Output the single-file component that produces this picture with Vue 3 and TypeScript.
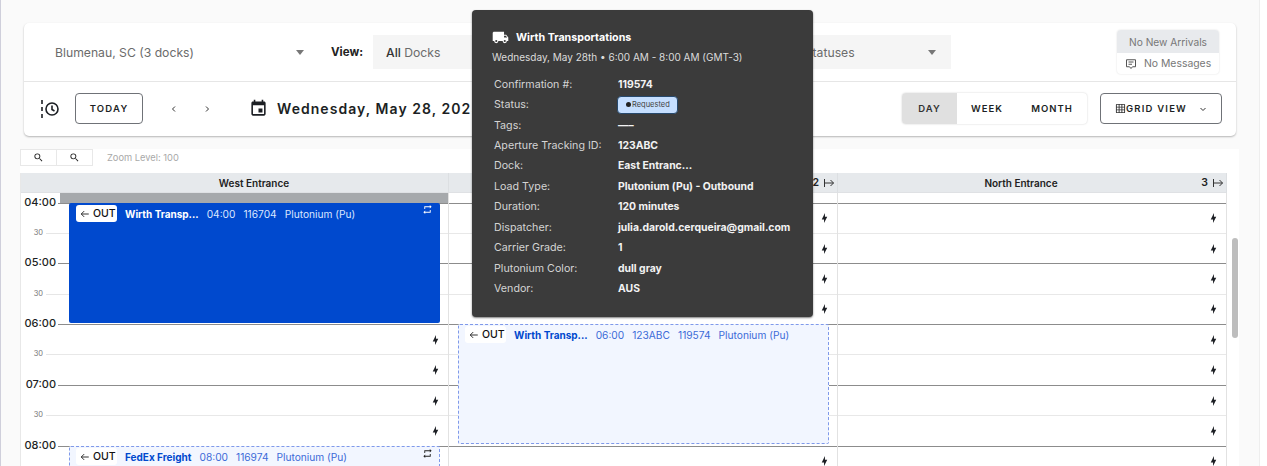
<script setup lang="ts">
interface Appt {
  top: number
  height: number
  kind: 'solid' | 'soft'
  name: string
  meta: string[]
  loop: boolean
}
interface Dock {
  name: string
  num: string
  gray: boolean
  appts: Appt[]
}

const hours = ['04:00', '05:00', '06:00', '07:00', '08:00']
const ticks: { label: string; hour: boolean }[] = []
hours.forEach((h) => {
  ticks.push({ label: h, hour: true })
  ticks.push({ label: '30', hour: false })
})

const docks: Dock[] = [
  {
    name: 'West Entrance',
    num: '',
    gray: true,
    appts: [
      { top: 10, height: 120, kind: 'solid', name: 'Wirth Transp...', meta: ['04:00', '116704', 'Plutonium (Pu)'], loop: true },
      { top: 253, height: 120, kind: 'soft', name: 'FedEx Freight', meta: ['08:00', '116974', 'Plutonium (Pu)'], loop: true }
    ]
  },
  {
    name: 'East Entrance',
    num: '2',
    gray: false,
    appts: [
      { top: 131, height: 120, kind: 'soft', name: 'Wirth Transp...', meta: ['06:00', '123ABC', '119574', 'Plutonium (Pu)'], loop: false }
    ]
  },
  { name: 'North Entrance', num: '3', gray: false, appts: [] }
]

const details: { label: string; value: string }[] = [
  { label: 'Confirmation #:', value: '119574' },
  { label: 'Status:', value: '' },
  { label: 'Tags:', value: '—–' },
  { label: 'Aperture Tracking ID:', value: '123ABC' },
  { label: 'Dock:', value: 'East Entranc...' },
  { label: 'Load Type:', value: 'Plutonium (Pu) - Outbound' },
  { label: 'Duration:', value: '120 minutes' },
  { label: 'Dispatcher:', value: 'julia.darold.cerqueira@gmail.com' },
  { label: 'Carrier Grade:', value: '1' },
  { label: 'Plutonium Color:', value: 'dull gray' },
  { label: 'Vendor:', value: 'AUS' }
]

const bolt = 'M11 15H6L13 1V9H18L11 23V15Z'
const loop = 'M17,17H7V14L3,18L7,22V19H19V13H17M7,7H17V10L21,6L17,2V5H5V11H7V7Z'
const magnify =
  'M9.5,3A6.5,6.5 0 0,1 16,9.5C16,11.11 15.41,12.59 14.44,13.73L14.71,14H15.5L20.5,19L19,20.5L14,15.5V14.71L13.73,14.44C12.59,15.41 11.11,16 9.5,16A6.5,6.5 0 0,1 3,9.5A6.5,6.5 0 0,1 9.5,3M9.5,5C7,5 5,7 5,9.5C5,12 7,14 9.5,14C12,14 14,12 14,9.5C14,7 12,5 9.5,5Z'
</script>

<template>
  <div class="page">
    <div class="edge"></div>
    <main class="main">
      <section class="card">
        <div class="filters">
          <div class="location">
            <span>Blumenau, SC (3 docks)</span>
            <i class="caret"></i>
          </div>
          <span class="view-label">View:</span>
          <div class="box box-docks">
            <span><b class="all">All</b> Docks</span>
          </div>
          <div class="box box-status">
            <span>All Statuses</span>
            <i class="caret"></i>
          </div>
          <div class="arrivals">
            <div class="arrivals-top">No New Arrivals</div>
            <div class="arrivals-bottom">
              <svg class="msg" viewBox="0 0 24 24" fill="none" stroke="#555" stroke-width="2">
                <path d="M3 3.5h18v14h-6l-3 3.5-3-3.5H3z" />
                <path d="M7 8h10M7 12.5h7" />
              </svg>
              <span>No Messages</span>
            </div>
          </div>
        </div>
        <div class="controls">
          <svg class="history" viewBox="0 0 20 20" fill="none" stroke="#1c1f24" stroke-width="1.6">
            <path d="M2 1v4M2 8v4M2 15v4" />
            <circle cx="12" cy="10" r="6" />
            <path d="M12 6.5V10.5l2.5 1.5" />
          </svg>
          <button class="outline today">TODAY</button>
          <svg class="chev chev-first" viewBox="0 0 8 8" fill="none" stroke="#333" stroke-width="1"><path d="M5 1.5 2.5 4 5 6.5" /></svg>
          <svg class="chev chev-second" viewBox="0 0 8 8" fill="none" stroke="#333" stroke-width="1"><path d="M3 1.5 5.5 4 3 6.5" /></svg>
          <svg class="cal" viewBox="0 0 24 24" fill="#1c1f24">
            <path d="M17 12h-5v5h5v-5zM16 1v2H8V1H6v2H5c-1.11 0-1.99.9-1.99 2L3 19c0 1.1.89 2 2 2h14c1.1 0 2-.9 2-2V5c0-1.1-.9-2-2-2h-1V1h-2zm3 18H5V8h14v11z" />
          </svg>
          <span class="date">Wednesday, May 28, 2025</span>
          <div class="range">
            <span class="range-item active">DAY</span>
            <span class="range-item week">WEEK</span>
            <span class="range-item month">MONTH</span>
          </div>
          <button class="outline gridview">
            <svg class="grid-ico" viewBox="0 0 24 24" fill="#333">
              <path d="M10,4V8H14V4H10M16,4V8H20V4H16M16,10V14H20V10H16M16,16V20H20V16H16M14,20V16H10V20H14M8,20V16H4V20H8M8,14V10H4V14H8M8,8V4H4V8H8M10,14H14V10H10V14M4,2H20A2,2 0 0,1 22,4V20A2,2 0 0,1 20,22H4C2.92,22 2,21.1 2,20V4A2,2 0 0,1 4,2Z" />
            </svg>
            <span>GRID VIEW</span>
            <svg class="grid-chev" viewBox="0 0 8 8" fill="none" stroke="#333" stroke-width="1"><path d="M1.5 3 4 5.5 6.5 3" /></svg>
          </button>
        </div>
      </section>

      <div class="zoombar">
        <div class="zoombtns">
          <span class="zoombtn"><svg viewBox="0 0 24 24" fill="#222"><path :d="magnify" /></svg></span>
          <span class="zoombtn"><svg viewBox="0 0 24 24" fill="#222"><path :d="magnify" /></svg></span>
        </div>
        <span class="zoomlabel">Zoom Level: 100</span>
      </div>

      <div class="sheet">
        <div class="timecol">
          <div class="head"></div>
          <div class="spacer"></div>
          <div v-for="(t, i) in ticks" :key="i" class="tick" :class="{ hour: t.hour }">
            <span class="tick-label">{{ t.label }}</span>
            <span class="tick-line"></span>
          </div>
        </div>
        <div v-for="d in docks" :key="d.name" class="dock">
          <div class="head dock-head" :class="{ numbered: d.num }">
            <span>{{ d.name }}</span>
            <span v-if="d.num" class="dock-num">
              {{ d.num }}
              <svg viewBox="0 0 12 12" fill="none" stroke="#333" stroke-width="1"><path d="M1.5 2v8M1.5 6h9M7.5 3l3 3-3 3" /></svg>
            </span>
          </div>
          <div class="dock-body">
            <div class="spacer" :class="{ gray: d.gray }"></div>
            <div v-for="(t, i) in ticks" :key="i" class="cell" :class="{ hour: t.hour }">
              <svg class="bolt" viewBox="0 0 24 24" fill="#1c1f24"><path :d="bolt" /></svg>
            </div>
            <article
              v-for="a in d.appts"
              :key="a.name + a.top"
              class="appt"
              :class="a.kind"
              :style="{ top: a.top + 'px', height: a.height + 'px' }"
            >
              <span class="badge">
                <svg viewBox="0 0 12 12" fill="none" stroke="#222" stroke-width="1.1"><path d="M10.5 6h-9M5 2.5 1.5 6 5 9.5" /></svg>
                OUT
              </span>
              <span class="appt-name">{{ a.name }}</span>
              <span v-for="m in a.meta" :key="m" class="appt-meta">{{ m }}</span>
              <svg v-if="a.loop" class="loop" viewBox="0 0 24 24" fill="currentColor"><path :d="loop" /></svg>
            </article>
          </div>
        </div>
        <div class="scroll"><span class="thumb"></span></div>
      </div>
    </main>
    <aside class="side"></aside>

    <div class="tip">
      <div class="tip-title">
        <svg viewBox="0 0 24 24" fill="#fff">
          <path d="M18,18.5A1.5,1.5 0 0,1 16.5,17A1.5,1.5 0 0,1 18,15.5A1.5,1.5 0 0,1 19.5,17A1.5,1.5 0 0,1 18,18.5M19.5,9.5L21.46,12H17V9.5M6,18.5A1.5,1.5 0 0,1 4.5,17A1.5,1.5 0 0,1 6,15.5A1.5,1.5 0 0,1 7.5,17A1.5,1.5 0 0,1 6,18.5M20,8H17V4H3C1.89,4 1,4.89 1,6V17H3A3,3 0 0,0 6,20A3,3 0 0,0 9,17H15A3,3 0 0,0 18,20A3,3 0 0,0 21,17H23V12L20,8Z" />
        </svg>
        <span>Wirth Transportations</span>
      </div>
      <div class="tip-sub">Wednesday, May 28th • 6:00 AM - 8:00 AM (GMT-3)</div>
      <div class="tip-rows">
        <div v-for="r in details" :key="r.label" class="tip-row">
          <span class="tip-label">{{ r.label }}</span>
          <span v-if="r.value" class="tip-value">{{ r.value }}</span>
          <span v-else class="chip"><i class="chip-dot"></i>Requested</span>
        </div>
      </div>
    </div>
  </div>
</template>

<style scoped>
.page {
  position: relative;
  display: flex;
  width: 1267px;
  height: 466px;
  overflow: hidden;
  background: #fafafa;
  font-family: Inter, "Liberation Sans", sans-serif;
  color: #1c1f24;
}
.edge {
  width: 1px;
  background: #cfcfdb;
  flex: none;
}
.main {
  width: 1258px;
  flex: none;
  padding: 23px 0 0 19px;
  box-sizing: border-box;
}
.side {
  flex: 1;
  background: #fff;
  border-left: 1px solid #eeeeee;
}
.card {
  width: 1212px;
  margin-left: 4px;
  background: #fff;
  border-radius: 5px;
  box-shadow: 0 1px 2px rgba(0, 0, 0, 0.28);
}
.filters {
  display: flex;
  align-items: center;
  height: 59px;
  box-sizing: border-box;
  padding-left: 31px;
  border-bottom: 1px solid #e6e6e6;
  font-size: 12.2px;
  color: #6b6b6b;
}
.location {
  display: flex;
  align-items: center;
  justify-content: space-between;
  width: 249px;
  margin-right: 27px;
}
.caret {
  display: block;
  width: 0;
  height: 0;
  border-left: 4.5px solid transparent;
  border-right: 4.5px solid transparent;
  border-top: 5px solid #777;
}
.view-label {
  width: 42px;
  font-weight: 700;
  font-size: 11.5px;
  color: #222;
}
.box {
  display: flex;
  align-items: center;
  justify-content: space-between;
  height: 34px;
  background: #f5f5f5;
  box-sizing: border-box;
}
.box-docks {
  width: 387px;
  padding-left: 13px;
  margin-right: 10px;
}
.all {
  font-weight: 500;
  color: #333;
}
.box-status {
  width: 181px;
  padding: 0 15px 0 17px;
}
.arrivals {
  width: 102px;
  height: 44px;
  margin-left: 166px;
  border-radius: 4px;
  overflow: hidden;
  box-shadow: 0 0 2px rgba(0, 0, 0, 0.14);
  font-size: 10px;
  color: #777;
  display: flex;
  flex-direction: column;
}
.arrivals-top {
  height: 23px;
  background: #e8eaed;
  display: flex;
  align-items: center;
  justify-content: center;
  font-size: 10.2px;
}
.arrivals-bottom {
  flex: 1;
  display: flex;
  align-items: center;
  padding-left: 8px;
  gap: 7px;
  font-size: 10.4px;
}
.msg {
  width: 12px;
  height: 12px;
}
.controls {
  display: flex;
  align-items: center;
  height: 54px;
  box-sizing: border-box;
  padding: 0 14px 1px 16px;
}
.history {
  width: 20px;
  height: 20px;
  margin-right: 15px;
  flex: none;
}
.outline {
  height: 31px;
  box-sizing: border-box;
  border: 1px solid #6f7277;
  border-radius: 4px;
  background: #fff;
  font-family: inherit;
  font-size: 9.5px;
  font-weight: 600;
  letter-spacing: 1.2px;
  color: #1c1f24;
  padding: 0;
}
.today {
  width: 68px;
}
.chev {
  width: 8px;
  height: 8px;
  flex: none;
}
.chev-first {
  margin-left: 27px;
}
.chev-second {
  margin-left: 25px;
}
.cal {
  width: 19px;
  height: 19px;
  margin-left: 38px;
  flex: none;
}
.date {
  margin-left: 9px;
  font-size: 14px;
  font-weight: 600;
  letter-spacing: 1.05px;
  white-space: nowrap;
  width: 300px;
  flex: none;
}
.range {
  display: flex;
  margin-left: auto;
  height: 31px;
  border-radius: 4px;
  overflow: hidden;
  box-shadow: 0 0 2px rgba(0, 0, 0, 0.2);
  font-size: 9.5px;
  font-weight: 600;
  letter-spacing: 1px;
}
.range-item {
  display: flex;
  align-items: center;
  justify-content: center;
}
.range-item.active {
  width: 55px;
  background: #e0e0e0;
  color: #333;
}
.week {
  width: 60px;
}
.month {
  width: 70px;
}
.gridview {
  display: flex;
  align-items: center;
  width: 122px;
  margin-left: 13px;
  padding-left: 14px;
}
.grid-ico {
  width: 11px;
  height: 11px;
  flex: none;
}
.grid-chev {
  width: 8px;
  height: 8px;
  margin-left: 12px;
  flex: none;
}
.zoombar {
  display: flex;
  width: 1219px;
  height: 24px;
  margin-top: 13px;
  background: #fff;
}
.zoombtns {
  display: flex;
  height: 17px;
  width: 73px;
  box-sizing: border-box;
  border: 1px solid #e8e8e8;
}
.zoombtn {
  flex: 1;
  display: flex;
  align-items: center;
  justify-content: center;
}
.zoombtn + .zoombtn {
  border-left: 1px solid #e8e8e8;
}
.zoombtn svg {
  width: 11px;
  height: 11px;
}
.zoomlabel {
  margin-left: 14px;
  height: 17px;
  line-height: 17px;
  font-size: 9.3px;
  color: #a9a9a9;
}
.sheet {
  display: flex;
  align-items: flex-start;
  width: 1219px;
}
.timecol {
  width: 40px;
  flex: none;
  box-sizing: border-box;
  border-left: 1px solid #e8e8e8;
  background: #fff;
}
.head {
  height: 20px;
  box-sizing: border-box;
  background: #e6e9ec;
  border-bottom: 1px solid #dfe1e4;
}
.spacer {
  height: 9.5px;
  background: #fff;
}
.spacer.gray {
  background: #a6a9ac;
}
.tick {
  display: flex;
  justify-content: flex-end;
  height: 30.4px;
}
.tick-label {
  font-size: 7.5px;
  color: #777;
  line-height: 10px;
  height: 10px;
  transform: translateY(-5px);
  margin-right: 3px;
}
.tick-line {
  width: 14px;
  border-top: 1px solid #e6e6e6;
  box-sizing: border-box;
  height: 1px;
}
.tick.hour .tick-label {
  font-size: 11px;
  font-weight: 500;
  color: #1c1f24;
  margin-right: 2px;
  transform: translateY(-8px);
  line-height: 14px;
  height: 14px;
}
.tick.hour .tick-line {
  width: 2px;
  border-top: 1.5px solid #8c8c8c;
}
.dock {
  width: 389px;
  flex: none;
}
.dock-head {
  display: flex;
  align-items: center;
  justify-content: center;
  position: relative;
  font-size: 10px;
  font-weight: 600;
  color: #222;
  border-right: 1px solid #dcdfe2;
}
.dock-head.numbered {
  padding-right: 22px;
}
.dock-num {
  position: absolute;
  right: 2px;
  top: 3px;
  display: flex;
  align-items: center;
  gap: 4px;
  font-size: 10.5px;
}
.dock-num svg {
  width: 12px;
  height: 12px;
}
.dock-body {
  position: relative;
  background: #fff;
  border-right: 1px solid #e2e2e2;
}
.cell {
  display: flex;
  align-items: center;
  justify-content: flex-end;
  height: 30.4px;
  box-sizing: border-box;
  padding-right: 7px;
  border-top: 1px solid #e8e8e8;
}
.cell.hour {
  border-top: 1.5px solid #8c8c8c;
}
.bolt {
  width: 11px;
  height: 12px;
}
.appt {
  position: absolute;
  left: 9px;
  width: 371px;
  box-sizing: border-box;
  display: flex;
  align-items: flex-start;
  gap: 8px;
  padding: 2px 0 0 7px;
  border-radius: 2px;
  font-size: 10.2px;
  line-height: 19px;
  white-space: nowrap;
}
.appt.solid {
  background: #0049ce;
  color: #dbe6ff;
}
.appt.soft {
  background: #f2f6ff;
  border: 1px dashed #7f99ea;
  color: #3c6bd8;
  padding: 1px 0 0 6px;
}
.badge {
  display: flex;
  align-items: center;
  gap: 3px;
  height: 17px;
  width: 41px;
  box-sizing: border-box;
  padding-left: 4px;
  background: #fff;
  border-radius: 3px;
  color: #111;
  font-weight: 500;
  font-size: 10.5px;
}
.badge svg {
  width: 10px;
  height: 10px;
  flex: none;
}
.appt-name {
  font-weight: 700;
  color: #0049ce;
  font-size: 10px;
}
.solid .appt-name {
  color: #fff;
}
.loop {
  position: absolute;
  right: 7px;
  top: 1px;
  width: 11px;
  height: 11px;
  color: #fff;
}
.soft .loop {
  color: #222;
  right: 6px;
}
.scroll {
  width: 12px;
  height: 293px;
  background: #fff;
  flex: none;
  display: flex;
  flex-direction: column;
  align-items: flex-end;
}
.thumb {
  display: block;
  width: 6px;
  height: 100px;
  margin-top: 65px;
  margin-right: 1px;
  border-radius: 3px;
  background: #bdbdbd;
}
.tip {
  position: absolute;
  left: 472px;
  top: 10px;
  width: 341px;
  height: 307px;
  box-sizing: border-box;
  padding: 20px 20px 0 21px;
  background: #3b3b3b;
  border-radius: 4px;
  box-shadow: 0 1px 2px rgba(0, 0, 0, 0.5);
  color: #fff;
}
.tip-title {
  display: flex;
  align-items: center;
  gap: 7px;
  height: 14px;
  font-size: 10.7px;
  font-weight: 700;
}
.tip-title svg {
  width: 17px;
  height: 17px;
  flex: none;
  margin-left: -1px;
}
.tip-sub {
  margin-top: 6px;
  margin-left: -1px;
  font-size: 10px;
  line-height: 14px;
  color: #dcdcdc;
  white-space: nowrap;
}
.tip-rows {
  margin-top: 10px;
}
.tip-row {
  display: flex;
  align-items: center;
  height: 20.43px;
  white-space: nowrap;
}
.tip-label {
  width: 124px;
  margin-left: 1px;
  flex: none;
  color: #d4d4d4;
  font-size: 10.7px;
}
.tip-value {
  font-weight: 700;
  color: #f2f2f2;
  font-size: 10.4px;
}
.chip {
  display: flex;
  align-items: center;
  gap: 1px;
  height: 18px;
  width: 61px;
  margin-left: -1px;
  box-sizing: border-box;
  padding-left: 8px;
  background: #c6dfff;
  border: 1px solid #27496d;
  border-radius: 4px;
  font-size: 7.5px;
  color: #444;
}
.chip-dot {
  display: block;
  width: 5px;
  height: 5px;
  border-radius: 50%;
  background: #222;
  flex: none;
}
</style>

<style>
html,
body {
  margin: 0;
  background: #fafafa;
  overflow: hidden;
}
</style>
